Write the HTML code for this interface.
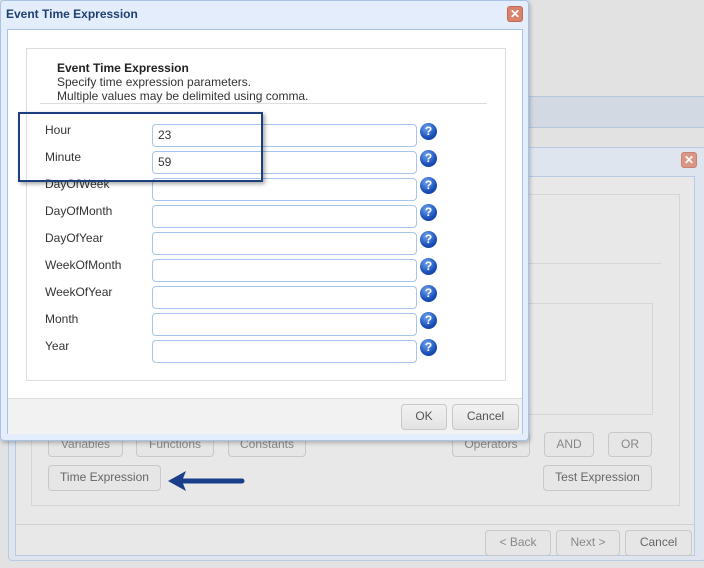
<!DOCTYPE html>
<html><head><style>
*{box-sizing:border-box;margin:0;padding:0}
body{width:704px;height:568px;position:relative;overflow:hidden;background:#e2e2e2;font-family:"Liberation Sans",sans-serif;font-size:12px;color:#333}
.abs{position:absolute}
.btn{position:absolute;border:1px solid #c8c8c8;border-radius:4px;background:linear-gradient(#f2f2f2,#e3e3e3);color:#555;font-size:12px;text-align:center;line-height:23px}
.bg .btn{color:#888;background:#e6e6e6}
.lbl{position:absolute;left:44px;font-size:12px;color:#333}
.inp{position:absolute;left:152px;width:265px;height:23px;border:1px solid #a8c4ec;border-radius:4px;background:#fff;padding-left:5px;line-height:21px;font-size:12px}
.help{position:absolute;left:419px;width:17px;height:17px;border-radius:50%;background:radial-gradient(circle at 40% 30%,#6fa4f0,#1a4fb8 60%,#0d3490);color:#fff;font-weight:bold;font-size:12px;text-align:center;line-height:17px}
.close{position:absolute;width:16px;height:16px;border-radius:3px;background:#d9836c;border:1px solid #c06a55;color:#fff;font-size:12px;font-weight:bold;text-align:center;line-height:14px}
</style></head><body>
<div class="abs" style="left:0;top:96px;width:704px;height:32px;background:#d3d9e2;border-top:1px solid #b8c6da;border-bottom:1px solid #b8c6da"></div>
<div class="abs bg" style="left:8px;top:147px;width:698px;height:414px;background:#dfe5ee;border:1px solid #b9cbe4;border-radius:4px">
 <div class="close" style="left:672px;top:4px;opacity:.8">✕</div>
 <div class="abs" style="left:6px;top:28px;width:680px;height:380px;background:#e8e8e8;border:1px solid #b9cbe4">
  <div class="abs" style="left:15px;top:17px;width:649px;height:312px;border:1px solid #d6d6d6"></div>
  <div class="abs" style="left:15px;top:86px;width:630px;height:1px;background:#d6d6d6"></div>
  <div class="abs" style="left:30px;top:126px;width:607px;height:112px;border:1px solid #d6d6d6"></div>
  <div class="btn" style="left:32px;top:255px;width:75px;height:25px">Variables</div>
  <div class="btn" style="left:120px;top:255px;width:78px;height:25px">Functions</div>
  <div class="btn" style="left:212px;top:255px;width:78px;height:25px">Constants</div>
  <div class="btn" style="left:436px;top:255px;width:78px;height:25px">Operators</div>
  <div class="btn" style="left:528px;top:255px;width:50px;height:25px">AND</div>
  <div class="btn" style="left:592px;top:255px;width:44px;height:25px">OR</div>
  <div class="btn" style="left:32px;top:288px;width:113px;height:26px;color:#666">Time Expression</div>
  <div class="btn" style="left:527px;top:288px;width:109px;height:26px;color:#666">Test Expression</div>
  <div class="abs" style="left:0;top:347px;width:678px;height:1px;background:#d0d0d0"></div>
  <div class="btn" style="left:469px;top:353px;width:66px;height:26px">&lt; Back</div>
  <div class="btn" style="left:540px;top:353px;width:64px;height:26px">Next &gt;</div>
  <div class="btn" style="left:609px;top:353px;width:67px;height:26px;color:#666">Cancel</div>
 </div>
</div>
<svg class="abs" style="left:160px;top:466px" width="90" height="30"><path d="M82 15 H22" stroke="#1a3f8a" stroke-width="5" stroke-linecap="round"/><path d="M8 15 L26 5 L22 15 L26 25 Z" fill="#1a3f8a"/></svg>
<div class="abs" style="left:0;top:0;width:529px;height:441px;background:#e4edfb;border:1px solid #a9c3e6;border-radius:4px;box-shadow:1px 2px 4px rgba(0,0,0,.25)">
 <div class="abs" style="left:5px;top:6px;font-weight:bold;color:#1d3f73;font-size:12px">Event Time Expression</div>
 <div class="close" style="left:506px;top:5px">✕</div>
 <div class="abs" style="left:6px;top:28px;width:516px;height:405px;background:#fff;border:1px solid #a9c3e6">
  <div class="abs" style="left:18px;top:18px;width:480px;height:333px;border:1px solid #ddd"></div>
  <div class="abs" style="left:49px;top:31px;font-weight:bold;color:#222">Event Time Expression</div>
  <div class="abs" style="left:49px;top:45px;color:#333">Specify time expression parameters.</div>
  <div class="abs" style="left:49px;top:59px;color:#333">Multiple values may be delimited using comma.</div>
  <div class="abs" style="left:32px;top:73px;width:447px;height:1px;background:#ddd"></div>
  <div class="abs" style="left:0;top:368px;width:514px;height:36px;background:#f2f2f2;border-top:1px solid #ddd"></div>
  <div class="btn" style="left:393px;top:374px;width:46px;height:26px">OK</div>
  <div class="btn" style="left:444px;top:374px;width:67px;height:26px">Cancel</div>
 </div>
 <div class="lbl" style="top:122px">Hour</div><div class="inp" style="top:123px;left:151px">23</div><div class="help" style="top:122px">?</div>
 <div class="lbl" style="top:149px">Minute</div><div class="inp" style="top:150px;left:151px">59</div><div class="help" style="top:149px">?</div>
 <div class="lbl" style="top:176px">DayOfWeek</div><div class="inp" style="top:177px;left:151px"></div><div class="help" style="top:176px">?</div>
 <div class="lbl" style="top:203px">DayOfMonth</div><div class="inp" style="top:204px;left:151px"></div><div class="help" style="top:203px">?</div>
 <div class="lbl" style="top:230px">DayOfYear</div><div class="inp" style="top:231px;left:151px"></div><div class="help" style="top:230px">?</div>
 <div class="lbl" style="top:257px">WeekOfMonth</div><div class="inp" style="top:258px;left:151px"></div><div class="help" style="top:257px">?</div>
 <div class="lbl" style="top:284px">WeekOfYear</div><div class="inp" style="top:285px;left:151px"></div><div class="help" style="top:284px">?</div>
 <div class="lbl" style="top:311px">Month</div><div class="inp" style="top:312px;left:151px"></div><div class="help" style="top:311px">?</div>
 <div class="lbl" style="top:338px">Year</div><div class="inp" style="top:339px;left:151px"></div><div class="help" style="top:338px">?</div>
 <div class="abs" style="left:17px;top:111px;width:245px;height:70px;border:2px solid #1d3f7f;box-shadow:2px 2px 4px rgba(0,0,0,.35)"></div>
</div>
</body></html>
